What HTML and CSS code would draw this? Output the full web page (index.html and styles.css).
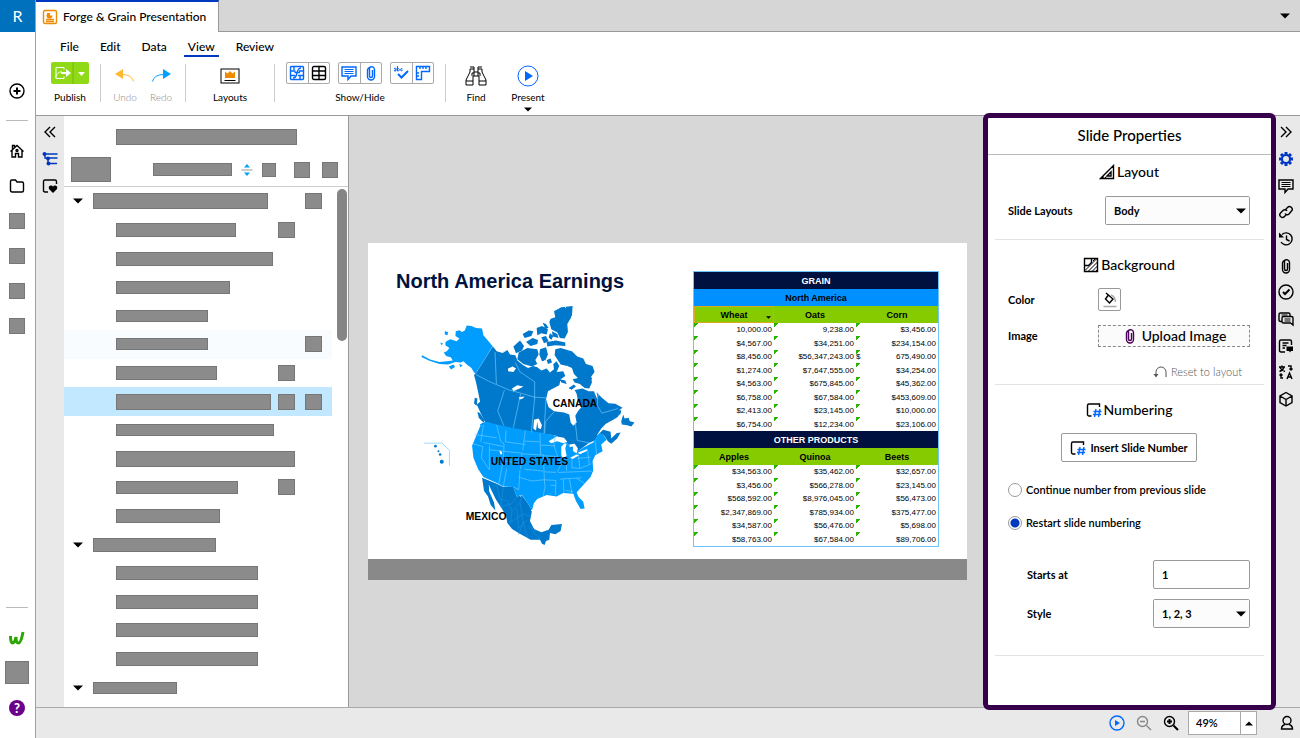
FILE: index.html
```html
<!DOCTYPE html>
<html lang="en">
<head>
    <meta charset="UTF-8">
    <meta name="viewport" content="width=device-width, initial-scale=1.0">
    <title>Forge &amp; Grain Presentation</title>
    <link rel="stylesheet" href="styles.css">
</head>
<body>
    <svg class="defs" aria-hidden="true">
        <symbol id="clip" viewBox="0 0 16 16"><path d="M4.500 4.500v7a3.500 3.500 0 0 0 7 0v-7a3 3 0 0 0-5 -2M6.500 2.500v8.500a1.500 1.500 0 0 0 3 0V5M4.500 5a3 3 0 0 1 2-2.500"/></symbol>
        <symbol id="number" viewBox="0 0 16 16">
            <path d="M5.500 14H3a1.500 1.500 0 0 1-1.500-1.500v-9A1.500 1.500 0 0 1 3 2h10.500v3"/>
            <path class="blue" d="M10 7 8.500 15M14 7l-1.500 8M7.500 9.500h8M7 12.500h8"/>
        </symbol>
        <symbol id="comment" viewBox="0 0 16 16"><path d="M1 2h14v9h-5l-3 3.500V11H1z"/><path class="thin" d="M3.500 4.500h9M3.500 6.500h9M3.500 8.500h9"/></symbol>
        <symbol id="caret" viewBox="0 0 10 6"><path d="M0 0.500h10L5 5.500z"/></symbol>
    </svg>

    <nav class="rail">
        <a class="logo" href="#">R</a>
        <button class="add" aria-label="Create"><svg class="icon" viewBox="0 0 16 16"><circle cx="8" cy="8" r="7"/><path class="heavy" d="M8 4.500v7M4.500 8h7"/></svg></button>
        <hr>
        <button aria-label="Home"><svg class="icon" viewBox="0 0 16 16"><path d="M1.500 8.500 8 2.500l6.500 6M3 7.500V14h3.500v-3.500h3V14H13V7.500M3.500 6V2.500h2V4"/><circle cx="8" cy="7.500" r="1"/></svg></button>
        <button aria-label="Files"><svg class="icon" viewBox="0 0 16 16"><path d="M1.500 3.500Q1.500 2 3 2h3.500L8 4h5q1.500 0 1.500 1.500v7q0 1.500-1.500 1.500H3q-1.500 0-1.500-1.500z"/></svg></button>
        <span class="slot"><i class="block chip"></i></span>
        <span class="slot"><i class="block chip"></i></span>
        <span class="slot"><i class="block chip"></i></span>
        <span class="slot"><i class="block chip"></i></span>
        <hr class="push">
        <button aria-label="Workiva"><svg class="icon mark" viewBox="0 0 16 16"><path d="M1.500 6q0 7 2 7t3.500-6q0 6 2.500 6T14 2"/></svg></button>
        <span class="slot"><i class="block avatar"></i></span>
        <button class="help" aria-label="Help"><b>?</b></button>
    </nav>

    <div class="app">
        <header class="tabs">
            <a class="tab" href="#">
                <svg class="icon orange" viewBox="0 0 16 16"><rect x="1.500" y="1.500" width="13" height="13" rx="1.500"/><path d="M4 10.500h8M4 12.500h8"/><path class="solid" d="M5 4h3v2.500h2.500A3 3 0 1 1 5 5z"/></svg>
                Forge &amp; Grain Presentation
            </a>
            <button class="tab-menu" aria-label="All tabs"><svg class="caret"><use href="#caret"/></svg></button>
        </header>

        <div class="ribbon">
            <nav class="menu">
                <a href="#">File</a>
                <a href="#">Edit</a>
                <a href="#">Data</a>
                <a class="active" href="#">View</a>
                <a href="#">Review</a>
            </nav>
            <div class="tools">
                <button class="tool publish">
                    <span class="publish-icon">
                        <svg viewBox="0 0 38 22"><path class="line" d="M13 7.500v-2H5v11h8v-2M4.500 15.500C6 11 8 9.500 11 10"/><path class="fill" d="M10 10h5V7l5 4-5 4v-3h-5z"/><path class="split" d="M22 0v22"/><path class="fill" d="M27 10h7l-3.500 4z"/></svg>
                    </span>
                    <span>Publish</span>
                </button>
                <i class="sep"></i>
                <button class="tool small">
                    <svg class="undo" viewBox="0 0 20 16"><path class="solid" d="M0 6 8 1v10z"/><path d="M7 6.500q10 0 11.500 7"/></svg>
                    <span>Undo</span>
                </button>
                <button class="tool small">
                    <svg class="redo" viewBox="0 0 20 16"><path class="solid" d="M20 6 12 1v10z"/><path d="M13 6.500q-10 0-11.500 7"/></svg>
                    <span>Redo</span>
                </button>
                <i class="sep"></i>
                <button class="tool layouts">
                    <svg viewBox="0 0 20 16"><rect x="1" y="1" width="18" height="14"/><path class="orange-fill" d="M5 10V3.500l2.500 2L10 3l2.500 2.500L15 3.500V10z"/><path d="M4.500 12.500h11"/></svg>
                    <span>Layouts</span>
                </button>
                <i class="sep"></i>
                <div class="show-hide">
                    <div class="groups">
                        <div class="group">
                            <button aria-label="Formulas"><svg class="icon blue" viewBox="0 0 16 16"><rect x="1.500" y="1.500" width="13" height="13" rx="1"/><path d="M1.500 6h5M1.500 10.500H6M10 6h4.500M9 10.500h5.500M5 1.500V5M11 11v3.500M4 13Q7 13 8 8t4-5M5.500 7.500H11"/></svg></button>
                            <button aria-label="Gridlines"><svg class="icon" viewBox="0 0 16 16"><rect x="1.500" y="1.500" width="13" height="13" rx="1.500"/><path d="M1.500 6h13M1.500 10.500h13M8 1.500v13"/></svg></button>
                        </div>
                        <div class="group">
                            <button aria-label="Comments"><svg class="icon blue"><use href="#comment"/></svg></button>
                            <button aria-label="Attachments"><svg class="icon blue"><use href="#clip"/></svg></button>
                        </div>
                        <div class="group">
                            <button aria-label="Spelling"><svg class="icon blue" viewBox="0 0 16 16"><path class="heavy" d="m5 9 3.500 3.500L15 6"/><path class="thin" d="M1 3.500q2-1 2 0V6H1.500q-1-1 1.500-1.500M4.500 1v5h1q2-1 0-2.500h-1M9.500 4Q7.500 3 7.500 5q.500 1.500 2 .5"/></svg></button>
                            <button aria-label="Ruler"><svg class="icon blue" viewBox="0 0 16 16"><path d="M1.500 1.500h13v5h-8v8h-5zM5 2v2M8 2v2M11 2v2M2 8h2M2 11h2"/></svg></button>
                        </div>
                    </div>
                    <span>Show/Hide</span>
                </div>
                <i class="sep"></i>
                <button class="tool find">
                    <svg viewBox="0 0 22 22"><path d="M5 4h4v3h4V4h4v3l4 8v5h-7v-9H8v9H1v-5l4-8zM5 2h4v2M13 4V2h4M9 8H7v3M13 8h2v3M9 7v4M13 7v4M1 16h7M14 16h7"/></svg>
                    <span>Find</span>
                </button>
                <button class="tool present">
                    <svg viewBox="0 0 22 22"><circle cx="11" cy="11" r="10"/><path class="solid" d="M8 6v10l8-5z"/></svg>
                    <span>Present</span>
                    <svg class="caret"><use href="#caret"/></svg>
                </button>
            </div>
        </div>

        <main class="workspace">
            <ul class="strip">
                <li><button aria-label="Collapse"><svg class="icon" viewBox="0 0 16 16"><path d="M8 3 3 8l5 5M13 3 8 8l5 5"/></svg></button></li>
                <li><button aria-label="Outline"><svg class="icon navy" viewBox="0 0 16 16"><path d="M1.500 3h14M3 3v4h12.500M6 7v5.500h9"/><g class="solid"><circle cx="2.500" cy="3" r="2"/><circle cx="6" cy="7.500" r="2"/><circle cx="6.500" cy="12.500" r="2"/></g></svg></button></li>
                <li><button aria-label="Favorites"><svg class="icon" viewBox="0 0 16 16"><path d="M6 14H3q-1.500 0-1.500-1.500v-9Q1.500 2 3 2h10q1.500 0 1.500 1.500V6"/><path class="solid" d="m11 15-4-4q-1-3 1.500-3.500Q10 7 11 8.500 12 7 13.500 7.500 16 8 15 11z"/></svg></button></li>
            </ul>

            <aside class="outline">
                <div class="outline-title"><i class="block h16" style="width: 181px"></i></div>
                <div class="outline-bar">
                    <i class="block thumb"></i>
                    <i class="block h13 search" style="width: 79px"></i>
                    <svg class="sort" viewBox="0 0 12 14"><path d="M6 1l3 3.500H3zM6 13l3-3.500H3z"/><path class="rule" d="M0.500 7h11"/></svg>
                    <i class="block h14"></i>
                    <i class="block h16"></i>
                    <i class="block h16"></i>
                </div>
                <div class="outline-body">
                    <ul class="slides">
                        <li class="section"><svg class="caret"><use href="#caret"/></svg><i class="block h16" style="width: 175px"></i><i class="block chip end"></i></li>
                        <li><i class="block h14" style="width: 120px"></i><i class="block chip mid"></i></li>
                        <li><i class="block h14" style="width: 157px"></i></li>
                        <li><i class="block h13" style="width: 114px"></i></li>
                        <li><i class="block h12" style="width: 92px"></i></li>
                        <li class="hover"><i class="block h12" style="width: 92px"></i><i class="block chip end"></i></li>
                        <li><i class="block h14" style="width: 101px"></i><i class="block chip mid"></i></li>
                        <li class="selected"><i class="block h16" style="width: 155px"></i><i class="block chip mid"></i><i class="block chip end"></i></li>
                        <li><i class="block h12" style="width: 158px"></i></li>
                        <li><i class="block h16" style="width: 179px"></i></li>
                        <li><i class="block h13" style="width: 122px"></i><i class="block chip mid"></i></li>
                        <li><i class="block h14" style="width: 104px"></i></li>
                        <li class="section"><svg class="caret"><use href="#caret"/></svg><i class="block h14" style="width: 123px"></i></li>
                        <li><i class="block h14" style="width: 142px"></i></li>
                        <li><i class="block h14" style="width: 142px"></i></li>
                        <li><i class="block h14" style="width: 142px"></i></li>
                        <li><i class="block h14" style="width: 142px"></i></li>
                        <li class="section"><svg class="caret"><use href="#caret"/></svg><i class="block h12" style="width: 84px"></i></li>
                    </ul>
                    <div class="scrollbar"><i></i></div>
                </div>
            </aside>

            <section class="canvas">
                <article class="slide">
                    <div class="slide-left">
                        <h1>North America Earnings</h1>
                        <svg class="map" viewBox="0 0 780 790" role="img" aria-label="Map of North America">
                            <filter id="coast" x="0" y="0" width="1" height="1">
                                <feTurbulence type="fractalNoise" baseFrequency="0.22" numOctaves="2" seed="4"/>
                                <feDisplacementMap in="SourceGraphic" scale="5" xChannelSelector="R" yChannelSelector="G"/>
                            </filter>
                            <g filter="url(#coast)">
                                <!-- Alaska -->
                                <g class="us">
                                    <path d="M278 163 250 130 246 110 228 108 214 102 200 101 194 116 186 120 178 115 167 118 166 132 178 140 170 148 150 142 136 150 136 160 148 168 140 178 131 182 138 192 152 196 158 206 140 208 118 210 90 203 66 190 64 195 86 206 118 216 144 218 166 210 182 212 190 208 200 218 214 228 222 242 228 246z"/>
                                    <path d="M134 118l10 2-2 10-8-2zM120 152l8 2-3 7zM146 224l14-6 5 7-12 8zM178 216l10 4-8 6z"/>
                                </g>
                                <!-- Canada -->
                                <g class="canada">
                                    <path d="M278 163 290 178 308 183 322 174 330 188 346 190 352 206 370 220 384 228 400 222 412 226 424 236 440 230 450 242 462 232 460 216 470 208 478 222 470 240 490 238 496 252 482 262 478 280 462 288 444 298 438 322 446 346 462 358 492 362 508 368 512 392 520 402 530 392 526 372 534 358 544 346 534 326 530 306 524 294 548 290 566 298 582 298 590 318 610 338 632 344 650 350 664 358 660 372 640 384 618 396 604 410 590 432 610 414 632 420 634 440 650 424 662 422 652 440 634 456 624 448 612 430 598 424 584 446 566 454 550 466 534 478 520 486 508 462 492 442 462 430 424 425 340 411 256 392 242 364 230 338 240 330 234 300 228 272 222 250z"/>
                                    <path d="M224 318l8 2-2 22-8-6zM232 360l8 4 14 22-4 6-14-14zM590 302l16 16 20 16 20 2 22 12-12 8-26-8-22-4-14-16zM664 388l6-20 4 12 12-2 4 10 14 4-10 12-12-4-16-2z"/>
                                    <!-- Arctic islands -->
                                    <path d="M484 46l34-4-2 30-14 24 2 24-10 20-14-2-8-16-18-10-6-22 4-10 14-4-4-18z"/>
                                    <path d="M410 108l16-6 18 10-4 16-16-4-12 6zM368 126l18-10 14 2-6 14-20 6zM378 150l20-12 16 6-2 12-20 6zM424 136l14-4 8 16-14 6zM428 92l10 4 8 12-10 2zM456 118l16 8 4 12-18-4z"/>
                                    <path d="M440 150l28-4 28 6v10l-30-2-24 4zM450 124l10 8-6 12-8-8z"/>
                                    <path d="M340 164l20-18 12 16-6 14-18 8zM356 182l26-14 30 4 4 16-10 16 6 12-16 8-26-8-18-14zM420 172l18-6 6 22-8 18-10 2-8-20z"/>
                                    <path d="M466 172l16-4 20 6 14 4 16 16 18 6 8 16 20 6 6 18-10 14 2 18-8 18-14-2-14-12-16-4-6-10 16-4-12-12-6-18-14-6-20-4-10-16-8-12z"/>
                                    <path d="M480 262l16 4 4 10-16-4zM506 288l16-10 6 6-14 10zM440 204l12-4 4 12-12 4z"/>
                                </g>
                                <!-- United States -->
                                <path class="us" d="M244 394 256 390 340 409 424 423 462 430 488 440 500 450 510 466 534 478 552 466 580 452 584 444 598 424 610 428 620 444 604 458 608 478 586 490 578 508 580 536 572 556 550 580 530 602 536 616 550 630 554 650 542 652 528 628 520 606 490 604 470 614 440 610 412 622 402 634 396 656 382 632 366 610 350 614 340 586 310 584 290 574 250 556 234 532 220 498 216 462 230 428z"/>
                                <!-- Mexico -->
                                <path class="canada" d="M246 558 290 576 310 586 340 586 350 614 366 611 382 632 396 656 390 688 402 712 424 722 446 714 454 700 486 697 482 718 466 728 450 724 448 744 438 748 434 760 426 756 420 744 392 744 362 728 336 712 322 694 318 672 304 648 288 624 278 604 266 578 268 600 282 632 286 656 272 640 264 614 252 598z"/>
                            </g>
                            <!-- lakes -->
                            <path class="water" d="M446 448l24-14 22 4 10 12-12 4-18-6-18 6zM484 464l10-10 6 2-4 14 4 22-10 8-6-10zM508 458l16-2 10 14-4 14-10-6-2-14-8 2zM510 498l20-10 8 2-20 12zM534 482l26-10 2 5-22 10zM324 230l14-6 10 6-8 10-16-2zM336 290l16-10 18 4-8 4-22 10zM402 384l14-4 10 20-4 12-8-4-2-18-4 26-8-6zM356 316l18-2-6 6-10 4zM298 478l5-2 4 10-5 3zM640 398l18-30 8 2-4 22-18 8z"/>
                            <g class="borders">
                                <path d="M278 163 226 246M285 180l4 96M228 248l38 20 60 26 44 12 34 10 38 2M346 212l14 28 44 30v50M313 295l-20 62 18 44M362 306l-22 102M404 318l-10 104M438 322l-6 104M462 360l-26 30-2 34M526 392l6 54 40 8M592 340l14 24 48-14M594 308l-2 34"/>
                                <path d="M224 428 290 438M250 400l-8 50M290 400l12 48 10 8-2 50M250 452l60 12M218 456l30 8-4 34 24 36M268 462v72M268 474l98 10M310 506l-14 70M318 416l-2 34M316 450l60 8M376 416l-8 60M420 424l2 66M372 448l48 2M366 484l-4 48M366 486l66 4M312 508l60 8M372 532l58 6M320 530l-10 54M360 534l-4 60-14-8M356 556l40 12 36-4M430 490l4 90M432 492l40 2M422 460l44 2M466 430l-4 32 12 34 10 20-12 24M434 540l34 2M432 564l36 2-2 44M498 500l2 36M516 500v28l24 2 34-14M474 542l102-4M480 562l64-4M490 562l2 42M508 560l8 44M532 500l40-4M534 480l6 50M562 470l6 46M586 446l4 42M530 560l26 16M520 600l-24-4M452 580l14 2M436 580l-6 32"/>
                                <path class="faint" d="M290 578l10 44 22 6M310 586l-8 60 32-10 16-22M322 628l14 30-4 34M336 658l24-26 6-20M332 692l38-26 24 10M350 650l6 60 24-24M360 632l10 64 14 44M370 690l-14 38M386 704l20 12M400 722l20 20"/>
                                <path d="M72 454h54l22 22v46"/>
                            </g>
                            <g class="canada"><circle cx="106" cy="463" r="4"/><circle cx="115" cy="478" r="3"/><circle cx="120" cy="488" r="4"/><circle cx="125" cy="510" r="6"/></g>
                            <text x="458" y="345">CANADA</text>
                            <text x="272" y="519">UNTED STATES</text>
                            <text x="197" y="685">MEXICO</text>
                        </svg>
                    </div>
                    <table class="earnings">
                        <colgroup><col class="first"><col><col></colgroup>
                        <tbody>
                            <tr class="banner"><th colspan="3">GRAIN</th></tr>
                            <tr class="region"><th colspan="3">North America</th></tr>
                            <tr class="names"><th class="focused">Wheat<svg viewBox="0 0 10 6"><use href="#caret"/></svg></th><th>Oats</th><th>Corn</th></tr>
                        </tbody>
                        <tbody class="figures">
                            <tr><td>10,000.00</td><td>9,238.00</td><td>$3,456.00</td></tr>
                            <tr><td>$4,567.00</td><td>$34,251.00</td><td>$234,154.00</td></tr>
                            <tr><td>$8,456.00</td><td>$56,347,243.00</td><td class="accounting"><span>$</span>675,490.00</td></tr>
                            <tr><td>$1,274.00</td><td>$7,647,555.00</td><td>$34,254.00</td></tr>
                            <tr><td>$4,563.00</td><td>$675,845.00</td><td>$45,362.00</td></tr>
                            <tr><td>$6,758.00</td><td>$67,584.00</td><td>$453,609.00</td></tr>
                            <tr><td>$2,413.00</td><td>$23,145.00</td><td>$10,000.00</td></tr>
                            <tr><td>$6,754.00</td><td>$12,234.00</td><td>$23,106.00</td></tr>
                        </tbody>
                        <tbody>
                            <tr class="banner"><th colspan="3">OTHER PRODUCTS</th></tr>
                            <tr class="names"><th>Apples</th><th>Quinoa</th><th>Beets</th></tr>
                        </tbody>
                        <tbody class="figures">
                            <tr><td>$34,563.00</td><td>$35,462.00</td><td>$32,657.00</td></tr>
                            <tr><td>$3,456.00</td><td>$566,278.00</td><td>$23,145.00</td></tr>
                            <tr><td>$568,592.00</td><td>$8,976,045.00</td><td>$56,473.00</td></tr>
                            <tr><td>$2,347,869.00</td><td>$785,934.00</td><td>$375,477.00</td></tr>
                            <tr><td>$34,587.00</td><td>$56,476.00</td><td>$5,698.00</td></tr>
                            <tr><td>$58,763.00</td><td>$67,584.00</td><td>$89,706.00</td></tr>
                        </tbody>
                    </table>
                </article>
            </section>

            <form class="properties">
                <h2>Slide Properties</h2>
                <section>
                    <h3><svg class="icon" viewBox="0 0 16 16"><path d="M1.500 14.500h13v-13zM8 12h4V8zM4 14v-2M6.500 14v-1"/></svg>Layout</h3>
                    <div class="field">
                        <label for="layout">Slide Layouts</label>
                        <span class="select wide"><select id="layout"><option>Body</option></select><svg class="caret"><use href="#caret"/></svg></span>
                    </div>
                </section>
                <section class="background">
                    <h3><svg class="icon" viewBox="0 0 16 16"><path d="M1.500 1.500h13v13h-13zM8.500 1.500v4l-3 3h-4"/><path class="thin" d="m2 13.500 12-12M5 14.500l9.500-9.500M9 14.500l5.500-5.500M12.500 14.500l2-2M10 4l2-2"/></svg>Background</h3>
                    <div class="field color">
                        <label for="color">Color</label>
                        <button id="color" type="button" class="swatch"><svg class="icon" viewBox="0 0 16 16"><path d="M6 3.500 3.500 7 7.500 11 11 7 4 1"/><path class="gray" d="M9 3q4 1 4.500 7M1.500 14.500h13"/></svg></button>
                    </div>
                    <div class="field image">
                        <label for="upload">Image</label>
                        <button id="upload" type="button" class="upload"><svg class="icon"><use href="#clip"/></svg>Upload Image</button>
                    </div>
                    <button type="button" class="reset"><svg class="icon" viewBox="0 0 16 16"><path d="M4 12V8a5 5 0 0 1 10 0v5"/><path class="solid" d="M1.500 10h5L4 13.500z"/></svg>Reset to layout</button>
                </section>
                <section class="numbering">
                    <h3><svg class="icon"><use href="#number"/></svg>Numbering</h3>
                    <button type="button" class="insert"><svg class="icon"><use href="#number"/></svg>Insert Slide Number</button>
                    <label class="radio"><input type="radio" name="numbering">Continue number from previous slide</label>
                    <label class="radio"><input type="radio" name="numbering" checked>Restart slide numbering</label>
                    <div class="field indent">
                        <label for="start">Starts at</label>
                        <input id="start" type="text" value="1">
                    </div>
                    <div class="field indent">
                        <label for="style">Style</label>
                        <span class="select"><select id="style"><option>1, 2, 3</option></select><svg class="caret"><use href="#caret"/></svg></span>
                    </div>
                </section>
            </form>

            <ul class="strip right">
                <li><button aria-label="Collapse"><svg class="icon" viewBox="0 0 16 16"><path d="m3 3 5 5-5 5M8 3l5 5-5 5"/></svg></button></li>
                <li><button aria-label="Slide properties"><svg class="icon navy" viewBox="0 0 16 16"><circle class="heavy" cx="8" cy="8" r="4"/><path class="teeth" d="M8 1v3M8 12v3M1 8h3M12 8h3M3 3l2 2M11 11l2 2M13 3l-2 2M5 11l-2 2"/></svg></button></li>
                <li><button aria-label="Comments"><svg class="icon"><use href="#comment"/></svg></button></li>
                <li><button aria-label="Links"><svg class="icon" viewBox="0 0 16 16"><path d="M7 6 9.500 3.500a2.500 2.500 0 0 1 4 3.500L11 10a2.500 2.500 0 0 1-4-.5M9 10l-2.500 2.500a2.500 2.500 0 0 1-4-3.500L5 6.500a2.500 2.500 0 0 1 4 .5"/></svg></button></li>
                <li><button aria-label="History"><svg class="icon" viewBox="0 0 16 16"><path d="M4 3.500A6 6 0 1 1 3 11M8.500 4.500V8.500l3 1.500"/><path class="solid" d="M1 1.500v5h5z"/></svg></button></li>
                <li><button aria-label="Attachments"><svg class="icon"><use href="#clip"/></svg></button></li>
                <li><button aria-label="Tasks"><svg class="icon" viewBox="0 0 16 16"><circle cx="8" cy="8" r="7"/><path class="heavy" d="m5 8 2 2 4.500-4.500"/></svg></button></li>
                <li><button aria-label="Replies"><svg class="icon" viewBox="0 0 16 16"><path d="M4 10.500H2.500Q1 10.500 1 9V3.500Q1 2 2.500 2h8Q12 2 12 3.500V5M5.500 5.500h8Q15 5.500 15 7v7l-2.500-2h-7Q4 12 4 10.500V7q0-1.500 1.500-1.500"/><path class="thin" d="M3.500 4h6M6.500 8h6M6.500 10h6"/></svg></button></li>
                <li><button aria-label="Notes"><svg class="icon" viewBox="0 0 16 16"><path d="M7 14H3q-1.500 0-1.500-1.500v-9Q1.500 2 3 2h9q1.500 0 1.500 1.500V7M4.500 5h6M4.500 7.500h4M4.500 10H7"/><path class="solid" d="M8.500 8.500h6.500v4.500h-2L12 14.500 11 13H8.500z"/></svg></button></li>
                <li><button aria-label="Translate"><svg class="icon" viewBox="0 0 16 16"><path d="M1 3h6M4 1.500V3M6 3Q5 6.500 1.500 7.500M2 3.500q1.500 3 5 4M10 2h3v4M11.500 4.500 13 6l1.500-1.500M9 15l2.500-6L14 15M10 13h3M5 14H3v-4M1.500 11.500 3 10l1.500 1.500"/></svg></button></li>
                <li><button aria-label="Model"><svg class="icon" viewBox="0 0 16 16"><path d="m8 1.500 6 3.500v6.500L8 15l-6-3.500V5zM2 5l6 3.500L14 5M8 8.500V15"/></svg></button></li>
            </ul>
        </main>

        <footer class="status">
            <button aria-label="Play"><svg class="icon blue" viewBox="0 0 16 16"><circle cx="8" cy="8" r="7"/><path class="solid" d="M6 5v6l5-3z"/></svg></button>
            <button class="disabled" aria-label="Zoom out"><svg class="icon" viewBox="0 0 16 16"><circle cx="6.500" cy="6.500" r="5"/><path d="M10.500 10.500 15 15M4 6.500h5"/></svg></button>
            <button aria-label="Zoom in"><svg class="icon" viewBox="0 0 16 16"><circle cx="6.500" cy="6.500" r="5"/><path class="heavy" d="M10.500 10.500 15 15M4 6.500h5M6.500 4v5"/></svg></button>
            <div class="zoom">
                <input type="text" value="49%" aria-label="Zoom level">
                <button aria-label="Zoom levels"><svg class="caret up"><use href="#caret"/></svg></button>
            </div>
            <button class="user" aria-label="Collaborators"><svg class="icon" viewBox="0 0 16 16"><circle cx="8" cy="5.500" r="4"/><path d="M6 9.500Q2.500 10.500 2.500 14h11q0-3.500-3.500-4.500"/></svg></button>
        </footer>
    </div>
</body>
</html>
```
FILE: styles.css
```css
* {
    box-sizing: border-box;
}
body {
    display: flex;
    height: 100vh;
    margin: 0;
    overflow: hidden;
    font-family: Lato, "Liberation Sans", sans-serif;
    font-size: 11px;
    line-height: 12px;
    color: #000;
    background: #fff;
}
h1, h2, h3, ul, hr {
    margin: 0;
    padding: 0;
    list-style: none;
}
a {
    color: inherit;
    text-decoration: none;
}
button, input, select {
    margin: 0;
    padding: 0;
    border: 0;
    background: none;
    font: inherit;
    color: inherit;
}

/* icons */
.defs {
    position: absolute;
    width: 0;
    height: 0;
}
svg {
    display: block;
    flex: none;
    fill: none;
    stroke: currentColor;
}
.icon {
    width: 16px;
    height: 16px;
    stroke-width: 1.4;
}
.caret {
    width: 10px;
    height: 6px;
    fill: currentColor;
    stroke: none;
}
.up {
    transform: rotate(180deg);
}
.solid {
    fill: currentColor;
    stroke: none;
}
.heavy {
    stroke-width: 2;
}
.teeth {
    stroke-width: 3;
}
.thin {
    stroke-width: 1;
}
.blue {
    color: #0068ff;
    stroke: #0068ff;
}
.navy {
    color: #0037c0;
}
.orange {
    color: #f08a00;
}
.gray {
    stroke: #aaa;
}
.block {
    flex: none;
    background: #8b8b8b;
    border: 1px solid #767676;
}

/* left rail */
.rail {
    flex: none;
    display: flex;
    flex-direction: column;
    align-items: center;
    width: 36px;
    padding-bottom: 13px;
    padding-right: 1px;
    border-right: 1px solid #a0a0a0;
}
.rail button, .slot {
    display: grid;
    place-items: center;
    width: 35px;
    height: 35px;
}
.logo {
    display: grid;
    place-items: center;
    align-self: stretch;
    height: 32px;
    margin-right: -1px;
    background: #0071bc;
    color: #fff;
    font-size: 16px;
}
.rail .add {
    margin: 41px 0 12px;
}
.rail hr {
    width: 22px;
    border: 0;
    border-top: 1px solid #bbb;
    margin-bottom: 12px;
}
.rail .push {
    margin-top: auto;
}
.chip {
    width: 16px;
    height: 16px;
}
.avatar {
    width: 24px;
    height: 23px;
}
.mark {
    color: #2ba600;
    stroke-width: 3;
}
.help b {
    width: 16px;
    height: 16px;
    border-radius: 50%;
    background: #6b008a;
    color: #fff;
    font-size: 13px;
    font-weight: 900;
    line-height: 16px;
}

/* tabs */
.app {
    flex: 1;
    min-width: 0;
    display: flex;
    flex-direction: column;
}
.tabs {
    flex: none;
    display: flex;
    justify-content: space-between;
    height: 32px;
    background: #d6d6d6;
    border-bottom: 1px solid #999;
}
.tab {
    display: flex;
    align-items: center;
    gap: 5px;
    height: 32px;
    padding: 0 12px 0 6px;
    border-top: 2px solid #0037c0;
    border-right: 1px solid #999;
    background: #fff;
    font-size: 12px;
    font-weight: 500;
}
.tab-menu {
    width: 28px;
    padding-left: 8px;
}

/* ribbon */
.ribbon {
    flex: none;
    display: flex;
    flex-direction: column;
    height: 84px;
    border-bottom: 1px solid #999;
}
.menu {
    display: flex;
    gap: 13px;
    padding: 7px 0 0 20px;
    font-size: 12px;
    font-weight: 500;
    line-height: 16px;
}
.menu a {
    padding: 0 4px;
    border-bottom: 2px solid transparent;
}
.menu .active {
    border-color: #0037c0;
}
.tools {
    display: flex;
    padding: 5px 0 0 10px;
    font-size: 10px;
}
.tool {
    display: flex;
    flex-direction: column;
    align-items: center;
    gap: 7px;
    width: 48px;
}
.tool > svg {
    width: 22px;
    height: 22px;
}
.tool > .caret {
    width: 8px;
    height: 5px;
}
.small {
    width: 36px;
}
.small span {
    color: #888;
    font-weight: 300;
}
.small > svg, .layouts > svg {
    width: 20px;
    height: 16px;
    margin: 6px 0 0;
}
.layouts {
    width: 76px;
}
.find, .present {
    gap: 4px;
    padding-top: 3px;
}
.present {
    width: 56px;
}
.present > svg:first-child {
    color: #0068ff;
}
.undo {
    color: #ffb92e;
}
.redo {
    color: #00a2ff;
}
.orange-fill {
    fill: #f08a00;
    stroke: none;
}
.publish-icon {
    width: 38px;
    height: 22px;
    border-radius: 2px;
    background: #8fd916;
    color: #fff;
}
.publish-icon .fill {
    fill: #fff;
    stroke: none;
}
.publish-icon .split {
    stroke: #74b80a;
}
.sep {
    width: 1px;
    height: 38px;
    margin: 2px 6px 0;
    background: #ccc;
}
.show-hide {
    display: flex;
    flex-direction: column;
    align-items: center;
    gap: 7px;
    padding: 0 5px;
}
.groups {
    display: flex;
    gap: 8px;
}
.group {
    display: flex;
    width: 44px;
    height: 22px;
    border: 1px solid #aaa;
    border-radius: 2px;
}
.group button {
    flex: 1;
    display: grid;
    place-items: center;
}
.group button + button {
    border-left: 1px solid #aaa;
}

/* workspace */
.workspace {
    flex: 1;
    min-height: 0;
    display: flex;
}
.strip {
    flex: none;
    width: 28px;
    padding-top: 3px;
    background: #e9e9e9;
}
.strip li {
    display: grid;
    place-items: center;
    height: 27px;
}
.strip li:nth-child(3n + 1) {
    height: 26px;
}
.right {
    width: 24px;
    padding-right: 4px;
}

/* outline */
.outline {
    flex: none;
    display: flex;
    flex-direction: column;
    width: 285px;
    border-right: 1px solid #999;
}
.outline-title {
    padding: 13px 0 0 52px;
}
.outline-title .block {
    display: block;
}
.outline-bar {
    display: flex;
    align-items: center;
    justify-content: flex-end;
    gap: 9px;
    height: 42px;
    padding: 8px 10px 0 7px;
    border-bottom: 1px solid #ccc;
}
.thumb {
    width: 40px;
    height: 25px;
    margin-right: auto;
}
.outline-bar .h14 {
    width: 14px;
}
.outline-bar .h16 {
    width: 16px;
    margin-left: 3px;
}
.outline-bar .h14 + .h16 {
    margin-left: 9px;
}
.sort {
    width: 12px;
    height: 14px;
    fill: #00a2ff;
    stroke: none;
}
.sort .rule {
    stroke: #999;
}
.h12 {
    height: 12px;
}
.h13 {
    height: 13px;
}
.h14 {
    height: 14px;
}
.h16 {
    height: 16px;
}
.outline-body {
    flex: 1;
    display: flex;
    justify-content: space-between;
    padding-bottom: 5px;
}
.slides {
    display: flex;
    flex-direction: column;
    width: 268px;
}
.slides li {
    flex: 1;
    display: grid;
    grid-template-columns: 162px 27px 17px;
    align-items: center;
    padding-left: 52px;
}
.slides .section {
    grid-template-columns: 20px 185px 27px 17px;
    padding-left: 9px;
}
.slides .chip {
    width: 17px;
    grid-row: 1;
}
.slides .mid {
    grid-column: -3;
}
.slides .end {
    grid-column: -2;
}
.slides .hover {
    background: #f8fcff;
}
.slides .selected {
    background: #c2e8ff;
}
.scrollbar {
    width: 11px;
    padding-top: 2px;
}
.scrollbar i {
    display: block;
    width: 10px;
    height: 152px;
    border-radius: 5px;
    background: #858585;
}

/* slide */
.canvas {
    flex: 1;
    min-width: 0;
    display: flex;
    align-items: center;
    padding: 0 16px 0 19px;
    background: #d7d7d7;
}
.slide {
    flex: 1;
    display: flex;
    align-items: flex-start;
    justify-content: space-between;
    padding: 29px 29px 4px 28px;
    border-bottom: 21px solid #898989;
    background: #fff;
    font-family: "Liberation Sans", Arial, sans-serif;
}
.slide h1 {
    margin-top: -2px;
    color: #00133f;
    font-size: 20px;
    line-height: 22px;
}
.map {
    width: 260px;
    height: 263px;
    margin-left: 4px;
}
.map .us {
    fill: #049dff;
    stroke: none;
}
.map .canada {
    fill: #0078cc;
    stroke: none;
}
.map .water {
    fill: #fff;
    stroke: none;
}
.borders {
    stroke: #6fc8fa;
    stroke-width: 2;
}
.faint {
    stroke: #1d8fdd;
}
.map text {
    fill: #000;
    stroke: none;
    font-size: 31px;
    font-weight: bold;
}
.earnings {
    width: 244px;
    table-layout: fixed;
    border-collapse: collapse;
    outline: 1px solid #6cc4fa;
    font-size: 8px;
    line-height: 12px;
}
.first {
    width: 80px;
}
.earnings th {
    padding: 0;
    height: 17px;
    font-size: 9px;
}
.banner {
    background: #00113f;
    color: #fff;
}
.region {
    background: #0090ff;
}
.names {
    background: #86cb00;
}
.names .focused {
    outline: 1px solid #d8a820;
    outline-offset: -1px;
}
.focused svg {
    float: right;
    width: 5px;
    height: 3px;
    margin: 7px 3px 0 -8px;
    fill: #000;
    stroke: none;
}
.figures td {
    height: 13px;
    padding: 1px 2px 0 0;
    text-align: right;
    font-weight: 500;
    background: linear-gradient(135deg, #28b400 3px, transparent 3px) no-repeat;
}
.figures tr:nth-child(even) td {
    height: 14px;
}
.accounting span {
    float: left;
}

/* slide properties */
.properties {
    flex: none;
    z-index: 1;
    width: 293px;
    margin: -3px 0;
    border: 5px solid #36004b;
    border-radius: 6px;
    background: #fff;
}
.properties h2 {
    padding: 8px 0 10px;
    border-bottom: 1px solid #bbb;
    font-size: 15px;
    font-weight: 500;
    line-height: 18px;
    text-align: center;
}
.properties section {
    margin: 0 7px;
    padding: 8px 14px 14px 13px;
    border-bottom: 1px solid #e2e2e2;
}
.properties h3 {
    display: flex;
    justify-content: center;
    align-items: center;
    gap: 2px;
    font-size: 14px;
    font-weight: 500;
    line-height: 18px;
}
.field {
    display: flex;
    justify-content: space-between;
    align-items: center;
    margin-top: 15px;
}
.field label {
    font-weight: bold;
}
.field input, .select {
    position: relative;
    width: 97px;
    height: 29px;
    border: 1px solid #999;
    border-radius: 2px;
    font-weight: bold;
}
.field input {
    padding-left: 8px;
}
.select.wide {
    width: 145px;
}
.select select {
    width: 100%;
    height: 100%;
    padding-left: 8px;
    appearance: none;
    background: #fcfcfc;
}
.select .caret {
    position: absolute;
    top: 11px;
    right: 3px;
    pointer-events: none;
}
.properties .background {
    padding: 16px 14px 3px 13px;
}
.color, .image {
    margin-top: 14px;
}
.swatch {
    display: grid;
    place-items: center;
    width: 23px;
    height: 23px;
    margin-right: 129px;
    border: 1px solid #999;
    border-radius: 2px;
}
.upload {
    display: flex;
    justify-content: center;
    align-items: center;
    gap: 4px;
    width: 152px;
    height: 22px;
    border: 1px dashed #888;
    background: #fbfbfb;
    font-size: 14px;
    font-weight: 500;
}
.upload .icon {
    color: #4a0058;
}
.reset {
    display: flex;
    align-items: center;
    gap: 3px;
    margin: 16px 8px 0 auto;
    color: #555;
    font-weight: 300;
    line-height: 18px;
}
.reset .icon {
    stroke-width: 1;
}
.properties .numbering {
    padding: 16px 14px 27px 13px;
}
.insert {
    display: flex;
    justify-content: center;
    align-items: center;
    gap: 4px;
    width: 136px;
    height: 29px;
    margin: 14px auto 19px;
    border: 1px solid #999;
    border-radius: 2px;
    font-weight: bold;
}
.radio {
    display: flex;
    align-items: center;
    gap: 4px;
    margin-bottom: 15px;
    font-weight: 600;
    line-height: 18px;
}
.radio input {
    appearance: none;
    width: 14px;
    height: 14px;
    border: 1px solid #999;
    border-radius: 50%;
}
.radio input:checked {
    background: radial-gradient(#0037c0 4px, #fff 5px);
}
.indent {
    margin: 10px 0 0 19px;
}
.radio + .indent {
    margin-top: 28px;
}

/* status bar */
.status {
    flex: none;
    display: flex;
    justify-content: flex-end;
    align-items: center;
    gap: 11px;
    height: 31px;
    padding-right: 5px;
    border-top: 1px solid #aaa;
    background: #e9e9e9;
}
.disabled {
    color: #888;
}
.zoom {
    display: flex;
    width: 69px;
    height: 24px;
    margin-left: -2px;
    border: 1px solid #aaa;
    background: #fff;
}
.zoom input {
    flex: 1;
    min-width: 0;
    padding-left: 7px;
    font-size: 11px;
    font-weight: 600;
}
.zoom button {
    display: grid;
    place-items: center;
    width: 16px;
    border-left: 1px solid #aaa;
}
.zoom .caret {
    width: 8px;
    height: 5px;
}
.user {
    margin-left: 11px;
}
```
